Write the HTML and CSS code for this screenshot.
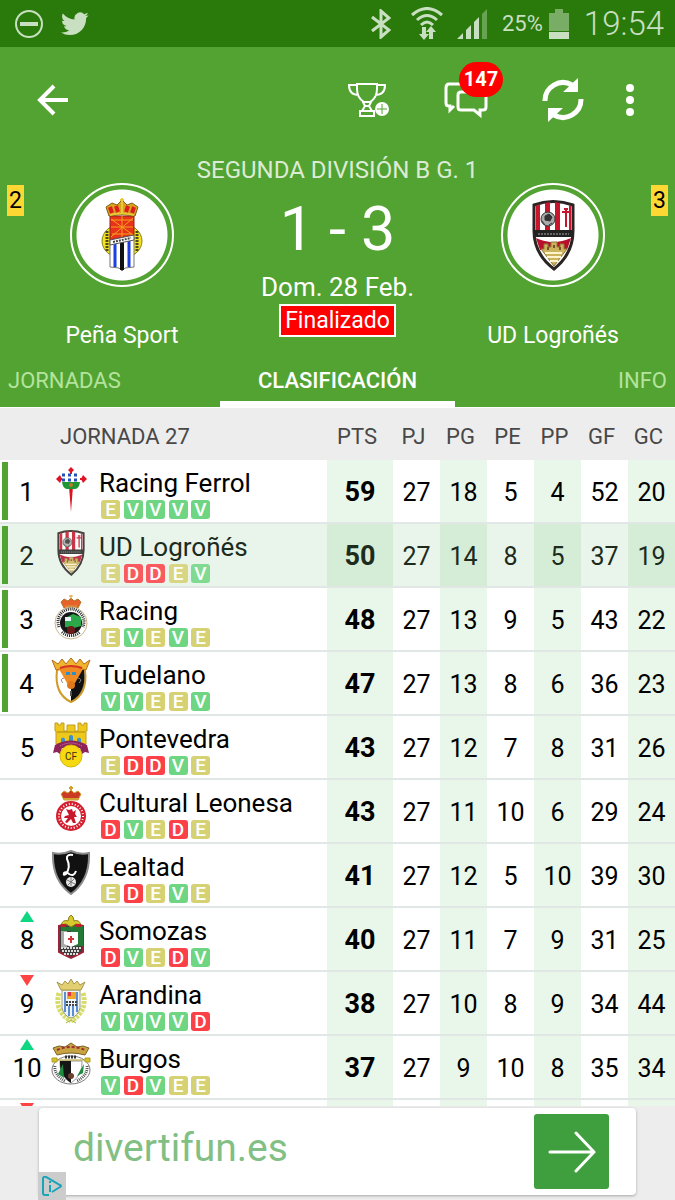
FILE: index.html
```html
<!DOCTYPE html>
<html lang="es">
<head>
    <meta charset="UTF-8">
    <meta name="viewport" content="width=device-width, initial-scale=1.0">
    <title>Peña Sport 1 - 3 UD Logroñés</title>
    <link rel="stylesheet" href="styles.css">
</head>
<body>
    <!-- Escudos -->
    <svg class="simbolos" aria-hidden="true">
        <symbol id="pena" viewBox="0 0 42 74">
            <ellipse cx="21" cy="43" rx="20" ry="17" fill="#f0e020" stroke="#8a8420"/>
            <path d="M6 33v20M36 33v20" stroke="#4a4a20" stroke-width="3" stroke-dasharray="2 1"/>
            <path d="M9 39h24v30l-9 1-3 3-3-3-9-1z" fill="#fff" stroke="#777"/>
            <path d="M14 43v26M28 43v26" stroke="#1d3fe0" stroke-width="3"/>
            <path d="M21 43v29" stroke="#111" stroke-width="4"/>
            <path d="M9 18h24v19L9 42z" fill="#e8321c" stroke="#8d2412"/>
            <path d="M10 21l22 16M32 20L10 39M10 29h22M21 18v21M10 22h22M11 36h20" stroke="#f5a21a" stroke-width="1"/>
            <path d="M9 42l24-5v5L9 47z" fill="#fff" stroke="#555"/>
            <path d="M12 44l18-4" stroke="#444" stroke-width="2" stroke-dasharray="2 1"/>
            <path d="M8 18L5 9l6-4 5 2 5-5 5 5 5-2 6 4-3 9q-13-3-26 0z" fill="#d9a21c" stroke="#80601a"/>
            <path d="M9 9l2 6M15 8l2 6M27 8l-2 6M33 9l-2 6" stroke="#dd1d1d" stroke-width="4"/>
            <path d="M21 0v15M19 2h4M9 17q12-3 24 0" stroke="#e9c936" stroke-width="2" fill="none"/>
        </symbol>
        <symbol id="logrones" viewBox="0 0 43 71">
            <path d="M2 5Q21-2 41 5v26Q41 54 22 69 2 54 2 31z" fill="#fff" stroke="#2a2422" stroke-width="3"/>
            <path d="M4 6l4-2v28H4zM13 3l5-1v30h-5zM23 2l5 1v29h-5zM39 6v26h-2V5z" fill="#c8142c"/>
            <path d="M34 9v18M30 12h8M32 9h4" stroke="#c8142c" stroke-width="2"/>
            <circle cx="16" cy="19" r="7" fill="#aaa" stroke="#333"/>
            <path d="M13 16l4-2 3 3-2 4-5-1zM10 21l3 4M20 23l-3 2" fill="#333" stroke="#333"/>
            <path d="M2 30h39v7H3z" fill="#222"/>
            <path d="M6 34h31" stroke="#aaa" stroke-dasharray="2 1"/>
            <path d="M4 38q17 8 35 0l-4 12H8z" fill="#b8102a"/>
            <path d="M11 38l10 5 11-5-10 2z" fill="#fff"/>
            <path d="M9 49h3v-5h4v3h3v-5h6v5h3v-3h4v5h3L22 66z" fill="#cdb35b" stroke="#8d783a"/>
            <path d="M13 53h17M15 57h14M18 61h8" stroke="#fff4cc" stroke-width="2"/>
            <path d="M16 50v-3M22 48v-3M28 50v-3" stroke="#74532a" stroke-width="2"/>
        </symbol>
        <symbol id="ferrol" viewBox="0 0 40 46">
            <path d="M18 20h4l-2 26z" fill="#d81420"/>
            <path d="M6 13h29M20 3v16" stroke="#e01225" stroke-width="2"/>
            <path d="M20 1l3 3-3 3-3-3zM5 13l4-4 2 4-2 4zM36 13l-4-4-2 4 2 4zM14 4h3M23 4h3" fill="#e01225"/>
            <path d="M11 8h18v8H11z" fill="#fff"/>
            <path d="M11 9h18M11 14h18" stroke="#2450b8" stroke-width="3" stroke-dasharray="3 3"/>
            <path d="M11 16h18q-1 7-5 7h-8q-4 0-5-7z" fill="#1d9633"/>
            <circle cx="20" cy="19" r="2" fill="#c27528"/>
        </symbol>
        <symbol id="racing" viewBox="0 0 40 46">
            <path d="M13 14l-3-6 3-3 4 2 3-3 3 3 4-2 3 3-3 6z" fill="#e8602a" stroke="#b0762c"/>
            <path d="M20 1v4M18 2h4M14 12h12" stroke="#d5a13a"/>
            <circle cx="20" cy="29" r="16" fill="#fff" stroke="#c9b88c"/>
            <circle cx="20" cy="29" r="11" fill="#171717"/>
            <path d="M14 24l8-4 8 3v9l-7 2-9-1z" fill="#2aa84a"/>
            <path d="M14 23h6v4h-6z" fill="#e8f1f8"/>
            <circle cx="20" cy="36" r="4" fill="#6d1a18"/>
            <path d="M8 33a13 13 0 1 1 24 0" fill="none" stroke="#222" stroke-width="3" stroke-dasharray="1 1"/>
            <path d="M11 38a13 13 0 0 0 18 0" fill="none" stroke="#222" stroke-width="3" stroke-dasharray="1 1"/>
        </symbol>
        <symbol id="tudelano" viewBox="0 0 40 46">
            <path d="M6 12q14-5 28 0 3 24-14 32Q3 36 6 12z" fill="#fff" stroke="#d09a28" stroke-width="2"/>
            <path d="M20 12h13q3 23-13 31z" fill="#111"/>
            <path d="M5 12L1 2l6 4 4-5 4 5 5-6 5 6 4-5 4 5 6-4-4 10q-15-5-30 0z" fill="#f0b42c" stroke="#b4701c"/>
            <path d="M8 11q12-4 24 0l-8 14h-8z" fill="#ef8b22"/>
            <path d="M15 14h4v3h-4zM21 14h4v3h-4z" fill="#2d8fc4"/>
            <path d="M13 20q-5 1-1 5M27 20q5 1 1 5" fill="none" stroke="#888"/>
            <circle cx="20" cy="27" r="4" fill="#e1781c"/>
            <path d="M20 33v5" stroke="#555" stroke-width="2"/>
            <path d="M9 10q11-4 22 0" fill="none" stroke="#d83325" stroke-width="2"/>
        </symbol>
        <symbol id="pontevedra" viewBox="0 0 40 46">
            <path d="M5 22V9H4V1h3v2h3V1h3v8h3V3h8v6h3V1h3v2h3V1h3v8h-1v13z" fill="#efc81c" stroke="#c29e20"/>
            <path d="M6 10h28" stroke="#a98718"/>
            <path d="M10 22v-5q2-3 4 0v5M18 20v-6q2-2 4 0v6M26 22v-5q2-3 4 0v5" fill="#3b92c9"/>
            <path d="M4 23q16-9 32 0l2 8-4-1-3 2-2-6H11l-2 6-3-2-4 1z" fill="#8d2358"/>
            <path d="M9 24q11-6 22 0" fill="none" stroke="#d48bb0" stroke-dasharray="1 1"/>
            <circle cx="20" cy="34" r="11" fill="#f7d911" stroke="#d3b710"/>
            <text x="20" y="38" font-size="10" text-anchor="middle" fill="#37301a">CF</text>
        </symbol>
        <symbol id="leonesa" viewBox="0 0 40 46">
            <path d="M13 14l-3-6 3-3 4 2 3-3 3 3 4-2 3 3-3 6z" fill="#cb3b23" stroke="#d0a231"/>
            <path d="M20 0v5M18 2h4M13 13h14" stroke="#d0a231" stroke-width="2"/>
            <circle cx="20" cy="30" r="15" fill="#d31f2f"/>
            <circle cx="20" cy="30" r="12" fill="none" stroke="#fff" stroke-width="2" stroke-dasharray="1 2"/>
            <circle cx="20" cy="30" r="10" fill="#fff"/>
            <path d="M15 23l3 1 3-1 1 3 3-2-1 4 2 3-3 0 2 6h-3l-2-4-4 4-2-1 3-4-4 0 1-2 4-1z" fill="#c8172a"/>
        </symbol>
        <symbol id="lealtad" viewBox="0 0 40 46">
            <path d="M2 3q9 2 18-2 9 4 18 2 1 27-18 41Q1 30 2 3z" fill="#111" stroke="#8b8b8b" stroke-width="2"/>
            <path d="M22 5q-7-1-6 4 4 8-1 15-3 2-2-1 2-2 5 1 5 3 7-3" fill="none" stroke="#fff" stroke-width="2"/>
            <circle cx="20" cy="32" r="5" fill="#e8e8e8"/>
            <path d="M16 30l8 4M20 27v9M17 35l6-6" stroke="#777"/>
        </symbol>
        <symbol id="somozas" viewBox="0 0 40 46">
            <path d="M8 12q6-2 12-1 6-1 12 1v26l-6 3-6 3-6-3-6-3z" fill="#3d3d3d" stroke="#9c2336" stroke-width="2"/>
            <path d="M20 12h12v20H20z" fill="#247a35"/>
            <path d="M10 17h6v17h-6z" fill="#a9a9a9"/>
            <path d="M10 13h10v4H10z" fill="#247a35"/>
            <path d="M13 18h14v12l-7 3-7-3z" fill="#fff"/>
            <path d="M20 22v7M17 25h6" stroke="#d03535" stroke-width="2"/>
            <path d="M10 34h20M11 37h18M13 40h14" stroke="#ddd" stroke-width="2" stroke-dasharray="2 1"/>
            <path d="M10 11q2-6 7-4l1-4 2-2 2 2 1 4q5-2 7 4l-5-1-5 3-5-3z" fill="#d8c92c" stroke="#8a7f1c"/>
            <path d="M10 10h5v3h-5zM25 10h5v3h-5z" fill="#c21e2a"/>
        </symbol>
        <symbol id="arandina" viewBox="0 0 40 46">
            <path d="M8 15q-5 18 12 28M32 15q5 18-12 28" fill="none" stroke="#d6dc6c" stroke-width="5" stroke-dasharray="3 1"/>
            <path d="M15 45l5-3 5 3" fill="none" stroke="#a9b340"/>
            <path d="M11 12h18v18q-2 8-9 10-7-2-9-10z" fill="#eef4fb" stroke="#9c9c7c"/>
            <path d="M14 14v20M18 28v10M22 28v10M26 14v20" stroke="#5c8fd0" stroke-width="2"/>
            <path d="M16 14h9v7h-9z" fill="#f0a52a"/>
            <path d="M17 14h3v4h-3z" fill="#d83448"/>
            <path d="M15 24h11M15 27h11" stroke="#444" stroke-width="2" stroke-dasharray="2 1"/>
            <path d="M10 12L6 4l5 3 3-4 3 3 3-5 3 5 3-3 3 4 5-3-4 8z" fill="#e1cf72" stroke="#a9964a"/>
        </symbol>
        <symbol id="burgos" viewBox="0 0 40 46">
            <ellipse cx="20" cy="28" rx="19" ry="14" fill="#fff" stroke="#777"/>
            <path d="M4 24q-1 9 10 15M36 24q1 9-10 15" fill="none" stroke="#555" stroke-width="3" stroke-dasharray="1 1"/>
            <path d="M9 19h22q1 14-11 22Q8 33 9 19z" fill="#fff" stroke="#999"/>
            <path d="M9 19h11v22Q8 33 9 19z" fill="#151515"/>
            <path d="M7 32l5-10 1 14zM26 34l7-12-1 9z" fill="#1d8a3d"/>
            <circle cx="20" cy="34" r="3" fill="#6b4030"/>
            <path d="M1 16h5v4H1zM34 16h5v4h-5zM6 18h28" fill="#d8c22a" stroke="#b09d28"/>
            <path d="M14 15h12" stroke="#333" stroke-width="3" stroke-dasharray="2 1"/>
            <path d="M6 13L2 6l6-2 6 1 6-4 6 4 6-1 6 2-4 7q-14-4-28 0z" fill="#c7a441" stroke="#7d6228"/>
            <path d="M6 8q14-6 28 0" fill="none" stroke="#a22a35" stroke-width="2" stroke-dasharray="3 2"/>
        </symbol>
    </svg>

    <!-- Barra de estado -->
    <div class="estado">
        <svg width="28" height="28" viewBox="0 0 28 28"><circle cx="14" cy="14" r="13" fill="none" stroke="currentColor" stroke-width="2"/><path d="M5 14h18" stroke="currentColor" stroke-width="4"/></svg>
        <svg class="twitter" width="28" height="24" viewBox="0 0 24 20"><path fill="currentColor" d="M23.6 2.4a10 10 0 0 1-2.8.8A4.800 4.800 0 0 0 23 .4a9.700 9.700 0 0 1-3.100 1.200 4.900 4.900 0 0 0-8.300 4.500A13.900 13.900 0 0 1 1.600 1a4.900 4.900 0 0 0 1.500 6.500A4.900 4.900 0 0 1 .9 6.900a4.900 4.900 0 0 0 3.900 4.900 4.900 4.900 0 0 1-2.200.1 4.900 4.900 0 0 0 4.600 3.400A9.900 9.900 0 0 1 0 17.300a13.900 13.900 0 0 0 7.500 2.200c9.100 0 14.300-7.700 14-14.600a10 10 0 0 0 2.100-2.500z"/></svg>
        <div class="sistema">
            <svg width="20" height="30" viewBox="0 0 20 30"><path d="M1 8l17 13-8 7V2l8 7L1 22" fill="none" stroke="currentColor" stroke-width="3"/></svg>
            <svg class="wifi" width="32" height="34" viewBox="0 0 32 34"><path d="M1 8q15-13 30 0M6 13q10-9 20 0M10 18q6-6 12 0" fill="none" stroke="currentColor" stroke-width="3"/><path d="M11 20h4v7h3l-5 6-5-6h3zM18 32v-7h-3l5-6 5 6h-3v7z" fill="currentColor"/></svg>
            <svg class="senal" width="30" height="30" viewBox="0 0 30 30"><path d="M0 30l6-6v6zM9 30v-9l5-5v14zM17 30V13l5-5v22z" fill="currentColor"/><path d="M25 30V5l5-5v30z" fill="currentColor" opacity=".4"/></svg>
            <span class="bateria">25%</span>
            <svg width="20" height="30" viewBox="0 0 20 30"><path d="M0 4h6V0h8v4h6v18H0z" fill="currentColor" opacity=".5"/><path d="M0 23h20v7H0z" fill="currentColor"/></svg>
            <span class="hora">19:54</span>
        </div>
    </div>

    <header class="cabecera">
        <div class="barra">
            <button class="icono" aria-label="Volver"><svg width="32" height="32" viewBox="0 0 32 32"><path d="M31 16H3M17 2L3 16l14 14" fill="none" stroke="currentColor" stroke-width="4"/></svg></button>
            <div class="acciones">
                <button class="icono" aria-label="Competición"><svg width="42" height="36" viewBox="0 0 42 36"><path d="M10 2h20v5q0 9-7 13h-6Q10 16 10 7zM10 3H2q0 10 10 10M30 3h8q0 10-10 10M16 20h8l-2 4 3 5H15l3-5zM17 24h6M13 29h14v5H13z" fill="none" stroke="currentColor" stroke-width="2"/><circle cx="35" cy="27" r="7" fill="currentColor"/><path d="M30 27h10M35 22v10" stroke="#52a331" stroke-width="1"/></svg></button>
                <button class="icono mensajes" aria-label="Comentarios"><svg width="44" height="36" viewBox="0 0 44 36"><path d="M10 24l-4 4v-4H5q-3 0-3-3V6q0-4 3-4h26M17 10h22q3 0 3 3v12q0 3-3 3h-3v5l-6-5H17q-3 0-3-3V13q0-3 3-3z" fill="none" stroke="currentColor" stroke-width="3"/></svg><span class="aviso">147</span></button>
                <button class="icono actualizar" aria-label="Actualizar"><svg width="42" height="44" viewBox="0 0 42 44"><path d="M3 23A18 18 0 0 1 30 7M39 21A18 18 0 0 1 12 37" fill="none" stroke="currentColor" stroke-width="5"/><path d="M36 0v14H21zM6 44V30h15z" fill="currentColor"/></svg></button>
                <button class="icono" aria-label="Más opciones"><svg width="8" height="32" viewBox="0 0 8 32"><g fill="currentColor"><circle cx="4" cy="4" r="4"/><circle cx="4" cy="16" r="4"/><circle cx="4" cy="28" r="4"/></g></svg></button>
            </div>
        </div>

        <div class="liga">SEGUNDA DIVISIÓN B G. 1</div>
        <div class="partido">
            <div class="equipo">
                <div class="circulo"><svg width="42" height="74"><use href="#pena"/></svg></div>
                <span class="tarjeta">2</span>
                <div>Peña Sport</div>
            </div>
            <div class="resultado">
                <div class="marcador">1 - 3</div>
                <div class="fecha">Dom. 28 Feb.</div>
                <div class="final">Finalizado</div>
            </div>
            <div class="equipo visitante">
                <div class="circulo"><svg width="43" height="71"><use href="#logrones"/></svg></div>
                <span class="tarjeta">3</span>
                <div>UD Logroñés</div>
            </div>
        </div>

        <nav class="pestanas">
            <button>JORNADAS</button>
            <button class="activa">CLASIFICACIÓN</button>
            <button>INFO</button>
        </nav>
    </header>

    <main class="clasificacion">
        <table>
            <colgroup>
                <col class="col-pos">
                <col>
                <col class="col-pts">
                <col class="col-num"><col class="col-num"><col class="col-num">
                <col class="col-num"><col class="col-num"><col class="col-num">
            </colgroup>
            <thead>
                <tr>
                    <th class="jornada" colspan="2">JORNADA 27</th>
                    <th>PTS</th>
                    <th>PJ</th>
                    <th>PG</th>
                    <th>PE</th>
                    <th>PP</th>
                    <th>GF</th>
                    <th>GC</th>
                </tr>
            </thead>
            <tbody id="tabla-equipos">
                <!-- Filas generadas dinámicamente -->
            </tbody>
        </table>
    </main>

    <!-- Publicidad -->
    <footer class="publicidad">
        <div class="anuncio">
            <a class="anunciante" href="#">divertifun.es</a>
            <button aria-label="Abrir anuncio"><svg width="48" height="42" viewBox="0 0 48 42"><path d="M2 21h44M28 2l18 19-18 19" fill="none" stroke="currentColor" stroke-width="3" stroke-linecap="round"/></svg></button>
            <a class="opciones" href="#" aria-label="Opciones de anuncios"><svg width="20" height="20" viewBox="0 0 20 20"><path d="M7 19H3q-2 0-2-2V3q0-3 3-2l14 8q2 1 0 2l-8 5M8 9v7M8 5v2" fill="none" stroke="#18a5b8" stroke-width="2"/></svg></a>
        </div>
    </footer>

    <script>
        // escudo, nombre, racha, puntos y resto de columnas
        const equipos = [
            { escudo: 'ferrol', nombre: 'Racing Ferrol', racha: 'EVVVV', datos: [59, 27, 18, 5, 4, 52, 20], zona: true },
            { escudo: 'logrones', nombre: 'UD Logroñés', racha: 'EDDEV', datos: [50, 27, 14, 8, 5, 37, 19], zona: true, marcado: true },
            { escudo: 'racing', nombre: 'Racing', racha: 'EVEVE', datos: [48, 27, 13, 9, 5, 43, 22], zona: true },
            { escudo: 'tudelano', nombre: 'Tudelano', racha: 'VVEEV', datos: [47, 27, 13, 8, 6, 36, 23], zona: true },
            { escudo: 'pontevedra', nombre: 'Pontevedra', racha: 'EDDVE', datos: [43, 27, 12, 7, 8, 31, 26] },
            { escudo: 'leonesa', nombre: 'Cultural Leonesa', racha: 'DVEDE', datos: [43, 27, 11, 10, 6, 29, 24] },
            { escudo: 'lealtad', nombre: 'Lealtad', racha: 'EDEVE', datos: [41, 27, 12, 5, 10, 39, 30] },
            { escudo: 'somozas', nombre: 'Somozas', racha: 'DVEDV', datos: [40, 27, 11, 7, 9, 31, 25], cambio: 'sube' },
            { escudo: 'arandina', nombre: 'Arandina', racha: 'VVVVD', datos: [38, 27, 10, 8, 9, 34, 44], cambio: 'baja' },
            { escudo: 'burgos', nombre: 'Burgos', racha: 'VDVEE', datos: [37, 27, 9, 10, 8, 35, 34], cambio: 'sube' }
        ];

        function generarTabla() {
            const cuerpo = document.getElementById('tabla-equipos');
            equipos.forEach((equipo, i) => {
                const fila = document.createElement('tr');
                if (equipo.zona) fila.classList.add('zona');
                if (equipo.marcado) fila.classList.add('marcado');
                const racha = [...equipo.racha].map(r => `<span class="${r.toLowerCase()}">${r}</span>`).join('');
                const celdas = equipo.datos.map(d => `<td>${d}</td>`).join('');
                fila.innerHTML = `
                    <td class="pos"><div><i class="flecha ${equipo.cambio || ''}"></i><span>${i + 1}</span></div></td>
                    <td class="nombre"><div>
                        <svg width="40" height="46"><use href="#${equipo.escudo}"/></svg>
                        <div>${equipo.nombre}<div class="racha">${racha}</div></div>
                    </div></td>
                    ${celdas}`;
                cuerpo.appendChild(fila);
            });
            // Siguiente fila, asoma por debajo
            const fila = document.createElement('tr');
            fila.innerHTML = '<td class="pos"><div><i class="flecha baja"></i></div></td><td></td>' + '<td></td>'.repeat(7);
            cuerpo.appendChild(fila);
        }

        generarTabla();
    </script>
</body>
</html>
```
FILE: styles.css
```css
* {
    box-sizing: border-box;
}
body {
    margin: 0;
    height: 100vh;
    display: flex;
    flex-direction: column;
    overflow: hidden;
    font-family: Roboto, sans-serif;
    font-size: 26px;
    background-color: #ededed;
}
svg {
    display: block;
    flex: none;
}
button {
    font: inherit;
    color: inherit;
    background: none;
    border: none;
    padding: 0;
    cursor: pointer;
}
.simbolos {
    display: none;
}

/* Barra de estado */
.estado {
    display: flex;
    align-items: center;
    height: 47px;
    padding: 0 11px 0 15px;
    gap: 18px;
    background-color: #297a0b;
    color: #c9dfc1;
}
.sistema {
    display: flex;
    align-items: center;
    margin-left: auto;
}
.wifi {
    margin-left: 20px;
}
.senal {
    margin: 0 15px 0 14px;
}
.bateria {
    font-size: 22px;
    margin-right: 6px;
}
.hora {
    font-size: 33px;
    font-weight: 300;
    margin-left: 15px;
}

/* Cabecera del partido */
.cabecera {
    background-color: #52a331;
    color: #fff;
}
.barra {
    display: flex;
    justify-content: space-between;
    align-items: center;
    height: 105px;
    padding: 0 41px 0 37px;
}
.acciones {
    display: flex;
    align-items: center;
}
.mensajes {
    position: relative;
    margin-left: 55px;
}
.actualizar {
    margin: 0 42px 0 54px;
}
.aviso {
    position: absolute;
    top: -20px;
    left: 15px;
    width: 44px;
    line-height: 35px;
    border-radius: 18px;
    background-color: #fe0000;
    font-size: 20px;
    font-weight: bold;
    text-align: center;
}
.liga {
    height: 31px;
    line-height: 36px;
    font-size: 24px;
    text-align: center;
    color: #dcebd6;
}
.partido {
    display: grid;
    grid-template-columns: 1fr 187px 1fr;
    text-align: center;
    height: 171px;
}
.equipo {
    position: relative;
    display: flex;
    flex-direction: column;
    align-items: center;
    gap: 35px;
    font-size: 23px;
    line-height: 28px;
}
.circulo {
    display: flex;
    justify-content: center;
    align-items: center;
    width: 104px;
    height: 104px;
    border: 2px solid #fff;
    border-radius: 50%;
    background: radial-gradient(circle, #fff 45px, transparent 46px);
}
.tarjeta {
    position: absolute;
    top: 2px;
    left: 7px;
    width: 17px;
    line-height: 31px;
    background-color: #fdd835;
    color: #000;
}
.visitante .tarjeta {
    left: auto;
    right: 7px;
}
.marcador {
    font-size: 61px;
    line-height: 92px;
}
.fecha {
    line-height: 24px;
    padding-bottom: 5px;
}
.final {
    width: 117px;
    margin: 0 auto;
    border: 2px solid #fff;
    background-color: #fe0000;
    font-size: 23px;
    line-height: 29px;
}
.pestanas {
    display: flex;
    height: 53px;
    font-size: 22px;
}
.pestanas button {
    flex: 1;
    padding: 0 8px;
    text-align: left;
    color: #b5e39f;
}
.pestanas button:last-child {
    text-align: right;
}
.pestanas .activa {
    flex: 0 0 235px;
    padding-top: 6px;
    border-bottom: 6px solid #fff;
    text-align: center;
    font-weight: 500;
    color: #fff;
}

/* Tabla */
.clasificacion {
    flex: 1;
    min-height: 0;
    overflow: hidden;
    border-top: 1px solid #fff;
}
table {
    width: 100%;
    table-layout: fixed;
    border-collapse: separate;
    border-spacing: 0;
}
.col-pos {
    width: 51px;
}
.col-pts {
    width: 66px;
}
.col-num {
    width: 47px;
}
th {
    height: 52px;
    padding: 4px 6px 0 0;
    font-size: 22px;
    font-weight: normal;
    color: #484848;
    white-space: nowrap;
}
.jornada {
    padding-left: 60px;
    text-align: left;
}
td {
    height: 64px;
    padding: 2px 0 0;
    border-bottom: 2px solid #e1e7e5;
    font-size: 25px;
    text-align: center;
    background-clip: padding-box;
}
tbody tr {
    background-color: #fff;
}
td:nth-child(2n+5), td:nth-child(3) {
    background-color: rgba(76, 185, 80, 0.12);
    background-clip: border-box;
}
td:nth-child(3) {
    font-weight: bold;
    font-size: 27px;
}
.marcado {
    background-color: #e9f5ea;
    color: #1d2b1d;
}
.marcado svg, .marcado .racha {
    opacity: 0.85;
}
.pos {
    padding: 0;
    font-size: 26px;
}
.pos > div {
    display: grid;
    grid-template-rows: 13px 36px 13px;
    justify-items: center;
    height: 62px;
    padding-left: 3px;
    line-height: 38px;
}
.zona .pos {
    padding: 2px 0 2px 2px;
}
.zona .pos > div {
    grid-template-rows: 11px 36px 11px;
    height: 58px;
    padding: 0 6px 0 0;
    border-left: 6px solid #52a331;
}
.flecha {
    width: 14px;
    height: 11px;
    margin-top: 3px;
}
.sube {
    background-color: #0fd680;
    clip-path: polygon(50% 0, 100% 100%, 0 100%);
}
.baja {
    background-color: #ff4444;
    clip-path: polygon(0 0, 100% 0, 50% 100%);
}
.nombre {
    padding: 0;
    font-size: 26px;
}
.nombre > div {
    display: flex;
    gap: 8px;
    padding-top: 6px;
    height: 62px;
    line-height: 34px;
    text-align: left;
    white-space: nowrap;
}
.racha {
    display: flex;
    justify-content: space-between;
    width: 109px;
    margin-left: 2px;
    font-size: 19px;
    font-weight: 500;
    line-height: 19px;
    color: #fff;
    text-align: center;
}
.racha span {
    width: 19px;
    border-radius: 3px;
}
.e {
    background-color: #d6d173;
}
.v {
    background-color: #6ed683;
}
.d {
    background-color: #fb4048;
}

/* Publicidad */
.publicidad {
    height: 94px;
    padding: 2px 39px 5px;
    background-color: #ededed;
}
.anuncio {
    position: relative;
    display: flex;
    justify-content: space-between;
    align-items: center;
    height: 87px;
    padding: 0 27px 0 34px;
    border-radius: 4px;
    background-color: #fff;
    box-shadow: 0 1px 3px rgba(0, 0, 0, 0.3);
}
.anunciante {
    font-size: 39px;
    line-height: 48px;
    padding-bottom: 8px;
    color: #82bf84;
    text-decoration: none;
}
.anuncio button {
    display: flex;
    justify-content: center;
    align-items: center;
    width: 75px;
    height: 75px;
    border-radius: 3px;
    background-color: #3f9f3e;
    color: #fff;
}
.opciones {
    position: absolute;
    left: -1px;
    bottom: -5px;
    padding: 4px;
    background-color: #ccc;
}
```
